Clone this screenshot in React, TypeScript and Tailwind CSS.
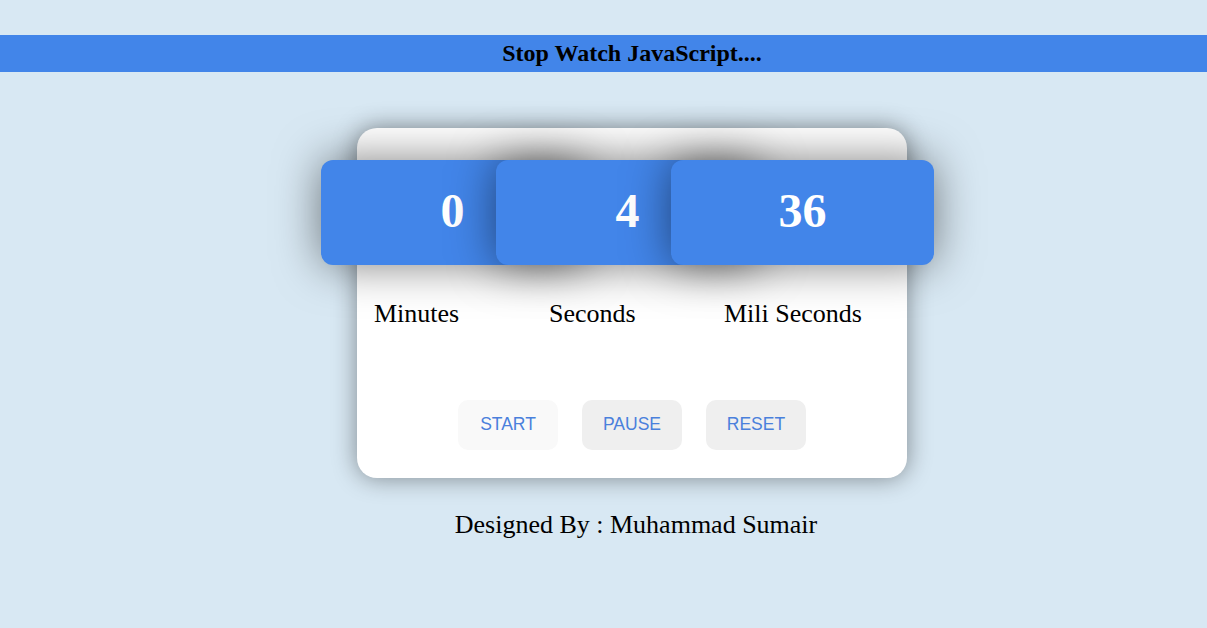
import React from "react";

const serif = { fontFamily: '"Liberation Serif", "Times New Roman", serif' };

export default function App() {
  const cols = [
    { v: "0", l: "Minutes" },
    { v: "4", l: "Seconds" },
    { v: "36", l: "Mili Seconds" },
  ];
  return (
    <div className="min-h-[628px] w-full bg-[#d8e8f3] pt-[35px] overflow-hidden" style={serif}>
      <div className="h-[37px] w-full bg-[#4285e9] flex items-center justify-center pl-[57px] pb-[2px]">
        <h1 className="text-[24px] font-bold text-black leading-none">Stop Watch JavaScript....</h1>
      </div>
      <div className="flex flex-col items-center pl-[57px]">
        <div className="mt-[56px] w-[550px] h-[350px] bg-white rounded-[20px] shadow-[0_0_24px_rgba(0,0,0,0.42)] pt-[32px] pl-[17px] flex flex-col">
          <div className="flex">
            {cols.map((c) => (
              <div key={c.l} className="w-[175px] shrink-0 flex flex-col">
                <div className="-ml-[53px] w-[263px] h-[105px] rounded-[12px] bg-[#4285e9] shadow-[0_0_45px_rgba(0,0,0,0.5)] flex items-center justify-center pb-[4px]">
                  <span className="text-white text-[48px] font-bold leading-none">{c.v}</span>
                </div>
                <div className="mt-[34px] text-[26px] text-black leading-[30px]">{c.l}</div>
              </div>
            ))}
          </div>
          <div className="mt-[71px] -ml-[17px] flex justify-center gap-[24px] pb-[2px]" style={{ fontFamily: '"Liberation Sans", Arial, sans-serif' }}>
            <button className="w-[100px] h-[50px] rounded-[10px] bg-[#f9f9f9] text-[#4a80dc] text-[17.5px] pb-[2px]">START</button>
            <button className="w-[100px] h-[50px] rounded-[10px] bg-[#efefef] text-[#4a80dc] text-[17.5px] pb-[2px]">PAUSE</button>
            <button className="w-[100px] h-[50px] rounded-[10px] bg-[#efefef] text-[#4a80dc] text-[17.5px] pb-[2px]">RESET</button>
          </div>
        </div>
        <p className="mt-[32px] text-[26px] text-black leading-[30px] pl-[8px]">Designed By : Muhammad Sumair</p>
      </div>
    </div>
  );
}
